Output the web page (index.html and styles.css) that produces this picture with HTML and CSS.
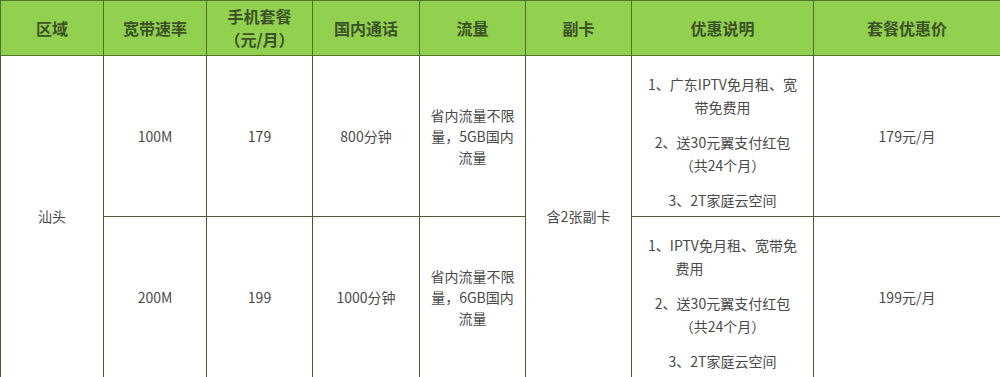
FILE: index.html
```html
<!DOCTYPE html>
<html lang="zh-CN">
<head>
<meta charset="utf-8">
<title>套餐价格</title>
<link rel="stylesheet" href="styles.css">
</head>
<body>
<table class="plans">
  <colgroup>
    <col class="c-area">
    <col class="c-speed">
    <col class="c-phone">
    <col class="c-call">
    <col class="c-data">
    <col class="c-sub">
    <col class="c-desc">
    <col class="c-price">
  </colgroup>
  <thead>
    <tr>
      <th>区域</th>
      <th>宽带速率</th>
      <th>手机套餐<br>（元/月）</th>
      <th>国内通话</th>
      <th>流量</th>
      <th>副卡</th>
      <th>优惠说明</th>
      <th>套餐优惠价</th>
    </tr>
  </thead>
  <tbody>
    <tr>
      <td rowspan="2">汕头</td>
      <td>100M</td>
      <td>179</td>
      <td>800分钟</td>
      <td>省内流量不限<br>量，5GB国内<br>流量</td>
      <td rowspan="2">含2张副卡</td>
      <td class="desc">
        <p>1、广东IPTV免月租、宽<br>带免费用</p>
        <p>2、送30元翼支付红包<br>（共24个月）</p>
        <p>3、2T家庭云空间</p>
      </td>
      <td>179元/月</td>
    </tr>
    <tr>
      <td>200M</td>
      <td>199</td>
      <td>1000分钟</td>
      <td>省内流量不限<br>量，6GB国内<br>流量</td>
      <td class="desc">
        <p>1、IPTV免月租、宽带免<br><span class="tail">费用</span></p>
        <p>2、送30元翼支付红包<br>（共24个月）</p>
        <p>3、2T家庭云空间</p>
      </td>
      <td>199元/月</td>
    </tr>
  </tbody>
</table>
</body>
</html>
```

FILE: styles.css
```css
html, body {
  margin: 0;
  padding: 0;
  background: #ffffff;
}

body {
  width: 1000px;
  height: 377px;
  overflow: hidden;
  font-family: "Microsoft YaHei", "Noto Sans CJK SC", "Noto Sans", sans-serif;
}

.plans {
  width: 1000px;
  table-layout: fixed;
  border-collapse: collapse;
}

.c-area { width: 103px; }
.c-speed { width: 103px; }
.c-phone { width: 106px; }
.c-call { width: 107px; }
.c-data { width: 106px; }
.c-sub { width: 106px; }
.c-desc { width: 182px; }
.c-price { width: 187px; }

.plans th {
  height: 55px;
  box-sizing: border-box;
  padding: 0 4px;
  background: #92d050;
  border: 1px solid #4c7326;
  color: #3b5226;
  font-size: 16px;
  font-weight: bold;
  line-height: 23px;
  text-align: center;
  vertical-align: middle;
}

.plans td {
  height: 161px;
  box-sizing: border-box;
  padding: 0 8px;
  border: 1px solid #55552f;
  color: #4a4a4a;
  font-size: 14px;
  line-height: 21px;
  text-align: center;
  vertical-align: middle;
}

.plans td.desc {
  padding: 0 4px;
}

.desc p {
  margin: 12px 0 0;
  line-height: 23px;
}

.tail {
  padding-right: 66px;
}
```
